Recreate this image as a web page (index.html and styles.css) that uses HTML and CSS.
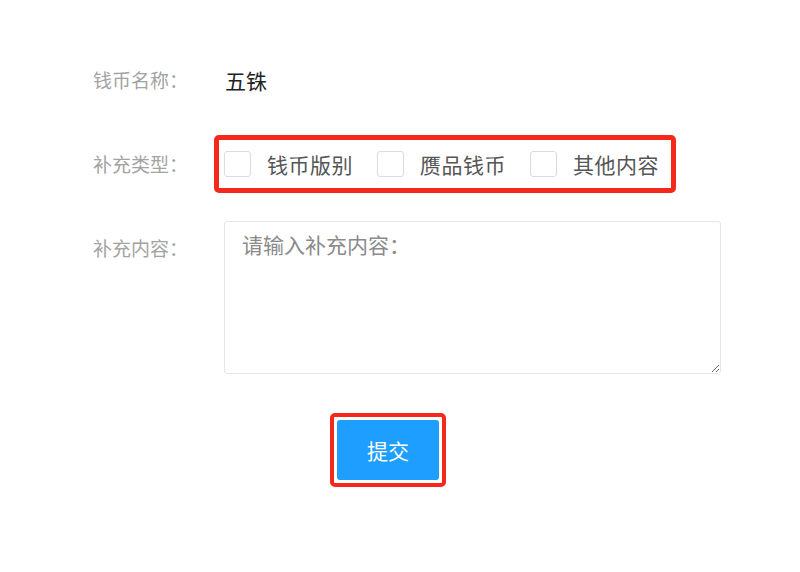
FILE: index.html
```html
<!DOCTYPE html>
<html lang="zh-CN">
<head>
    <meta charset="UTF-8">
    <meta name="viewport" content="width=device-width, initial-scale=1.0">
    <title>补充钱币信息</title>
    <link rel="stylesheet" href="styles.css">
</head>
<body>
    <form class="supply-form">
        <div class="row row-name">
            <span class="label">钱币名称：</span>
            <span class="value">五铢</span>
        </div>
        <div class="row row-type">
            <span class="label">补充类型：</span>
            <div class="mark mark-group">
                <div class="check-group">
                    <label class="check"><input type="checkbox" name="type" value="version"><span>钱币版别</span></label>
                    <label class="check"><input type="checkbox" name="type" value="fake"><span>赝品钱币</span></label>
                    <label class="check"><input type="checkbox" name="type" value="other"><span>其他内容</span></label>
                </div>
            </div>
        </div>
        <div class="row row-content">
            <span class="label">补充内容：</span>
            <textarea class="content" placeholder="请输入补充内容："></textarea>
        </div>
        <div class="actions">
            <span class="mark mark-btn">
                <button type="button" class="btn-submit">提交</button>
            </span>
        </div>
    </form>
</body>
</html>
```

FILE: styles.css
```css
body {
    margin: 0;
    padding: 0;
    background: #fff;
    font-family: "Noto Sans CJK SC", "Noto Sans", sans-serif;
}
.supply-form {
    padding: 60px 0 80px 93px;
}
.row {
    display: flex;
    align-items: center;
}
.label {
    width: 131px;
    font-size: 19px;
    line-height: 30px;
    color: #a3a3a3;
    flex-shrink: 0;
}
.row-name {
    height: 40px;
}
.value {
    font-size: 21px;
    color: #222;
    padding-left: 1px;
}
.row-type {
    margin-top: 35px;
}
.mark {
    display: inline-block;
    border: 5px solid #f4281b;
    border-radius: 5px;
}
.mark-group {
    margin-left: -10px;
    padding: 5px 12px 5px 5px;
}
.check-group {
    display: flex;
    align-items: center;
    height: 38px;
}
.check {
    display: flex;
    align-items: center;
    margin-right: 24px;
    font-size: 21px;
    color: #555;
}
.check:last-child {
    margin-right: 0;
}
.check input {
    appearance: none;
    -webkit-appearance: none;
    width: 27px;
    height: 26px;
    margin: 0 16px 0 0;
    border: 1px solid #dcdcdc;
    border-radius: 3px;
    background: #fff;
}
.check span {
    letter-spacing: 0.5px;
}
.row-content {
    margin-top: 28px;
    align-items: flex-start;
}
.row-content .label {
    margin-top: 12px;
}
.content {
    width: 497px;
    height: 153px;
    box-sizing: border-box;
    padding: 7px 17px;
    border: 1px solid #e6e6e6;
    border-radius: 3px;
    font-family: inherit;
    font-size: 21px;
    line-height: 1.5;
    color: #333;
}
.content::placeholder {
    color: #8a8a8a;
}
.actions {
    margin-top: 39px;
    padding-left: 237px;
}
.mark-btn {
    border-width: 4px;
    padding: 3px;
}
.btn-submit {
    display: block;
    width: 102px;
    height: 60px;
    border: none;
    border-radius: 3px;
    background-color: #1e9fff;
    color: #fff;
    font-family: inherit;
    font-size: 21px;
    cursor: pointer;
}
```
